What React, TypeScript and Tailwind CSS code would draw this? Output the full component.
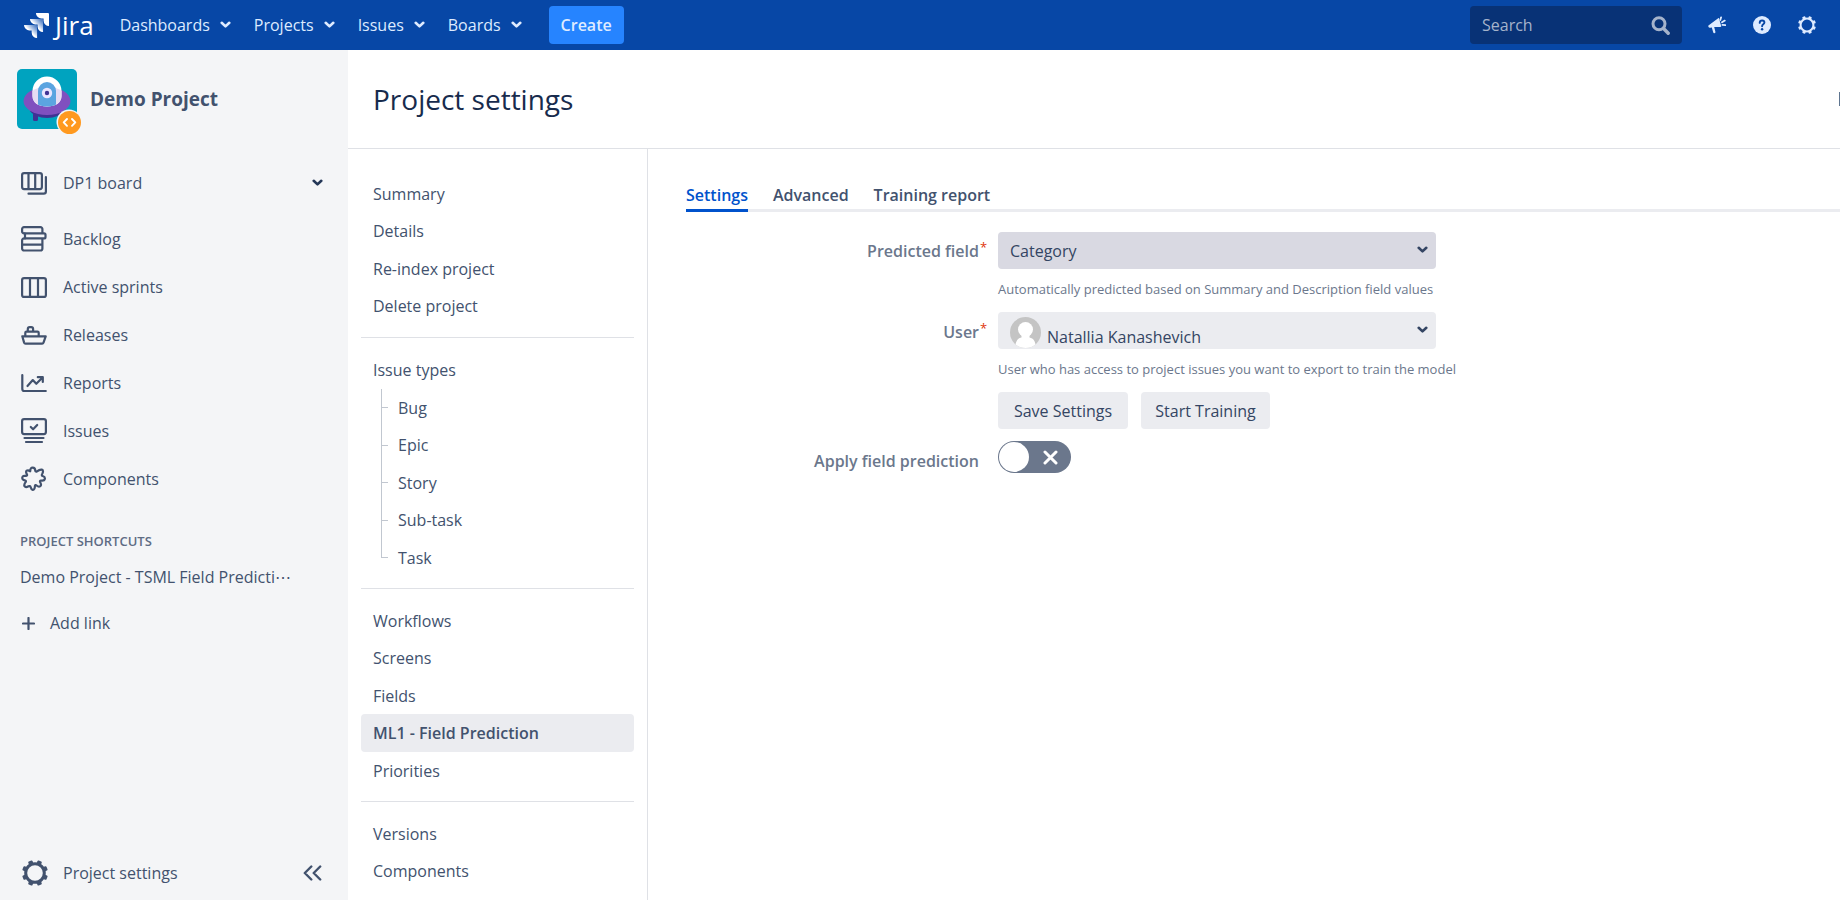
import React from 'react';

const primaryNav = ['Dashboards', 'Projects', 'Issues', 'Boards'];

const generalLinks = ['Summary', 'Details', 'Re-index project', 'Delete project'];
const issueTypes = ['Bug', 'Epic', 'Story', 'Sub-task', 'Task'];
const schemeLinks = ['Workflows', 'Screens', 'Fields', 'ML1 - Field Prediction', 'Priorities'];
const versionLinks = ['Versions', 'Components'];

const ACTIVE_LINK = 'ML1 - Field Prediction';

const ChevronDown = ({ className = '' }: { className?: string }) => (
  <svg className={className} width="11" height="8" viewBox="0 0 11 8" fill="none" stroke="currentColor" strokeWidth="2.6" strokeLinecap="round" strokeLinejoin="round">
    <path d="M1.7 1.8 5.5 5.4 9.3 1.8" />
  </svg>
);

const Gear = ({ size }: { size: number }) => (
  <svg width={size} height={size} viewBox="0 0 26 26" fill="none">
    <circle cx="13" cy="13" r="9.3" stroke="currentColor" strokeWidth="3" />
    {[22.5, 67.5, 112.5, 157.5, 202.5, 247.5, 292.5, 337.5].map((angle) => (
      <rect key={angle} x="10.7" y="0" width="4.6" height="4" rx="1" fill="currentColor" transform={`rotate(${angle} 13 13)`} />
    ))}
  </svg>
);

const JiraMark = () => (
  <svg width="25" height="25" viewBox="0 0 24 24">
    <defs>
      <linearGradient id="mark-mid" x1="18" y1="6" x2="11" y2="13" gradientUnits="userSpaceOnUse">
        <stop offset="0.15" stopColor="#deebff" stopOpacity="0.35" />
        <stop offset="0.9" stopColor="#fff" />
      </linearGradient>
      <linearGradient id="mark-low" x1="12.5" y1="11.5" x2="5.5" y2="18.5" gradientUnits="userSpaceOnUse">
        <stop offset="0.15" stopColor="#deebff" stopOpacity="0.35" />
        <stop offset="0.9" stopColor="#fff" />
      </linearGradient>
    </defs>
    <path fill="#fff" d="M23.013 0H11.455a5.215 5.215 0 0 0 5.215 5.215h2.129v2.057A5.215 5.215 0 0 0 24 12.483V1.005A1.001 1.001 0 0 0 23.013 0Z" />
    <path fill="url(#mark-mid)" d="M17.294 5.757H5.736a5.215 5.215 0 0 0 5.215 5.214h2.129v2.058a5.218 5.218 0 0 0 5.215 5.214V6.758a1.001 1.001 0 0 0-1.001-1.001z" />
    <path fill="url(#mark-low)" d="M11.571 11.513H0a5.218 5.218 0 0 0 5.232 5.215h2.13v2.057A5.215 5.215 0 0 0 12.575 24V12.518a1.005 1.005 0 0 0-1.005-1.005z" />
  </svg>
);

const SearchIcon = () => (
  <svg width="19" height="19" viewBox="0 0 19 19" fill="none" stroke="currentColor">
    <circle cx="8" cy="7.8" r="6" strokeWidth="3" />
    <path d="m12.8 12.8 4.4 4.4" strokeWidth="3.4" strokeLinecap="round" />
  </svg>
);

const Megaphone = () => (
  <svg width="18" height="18" viewBox="0 0 18 18" fill="currentColor">
    <path d="M10.2 2.2c.3-.2.7 0 .8.3l2.2 7.6c.1.5-.2.9-.7.9H6.200l1.200 4.800a1.100 1.100 0 0 1-1 1.400c-.7.1-1-.3-1.200-.9L3.800 11.500l-1.500.3C1.400 12 .7 11.600.4 10.800.1 10 .4 9.300 1.100 8.900Z" />
    <path d="m12.300 4 .8-2.700M14 6.300l2.800-1.700M14.400 8.900l3 .3" fill="none" stroke="currentColor" strokeWidth="1.800" strokeLinecap="round" />
  </svg>
);

const HelpIcon = () => (
  <svg width="18" height="18" viewBox="0 0 18 18" fill="none">
    <circle cx="9" cy="9" r="9" fill="currentColor" />
    <path d="M6.700 6.900c0-1.500 1-2.400 2.400-2.400 1.400 0 2.300.9 2.300 2 0 1.800-2.300 1.800-2.300 3.700" stroke="#0747a6" strokeWidth="1.900" strokeLinecap="round" />
    <circle cx="9.100" cy="13.300" r="1.200" fill="#0747a6" />
  </svg>
);

const ProjectAvatar = () => (
  <svg width="60" height="60" viewBox="0 0 60 60">
    <rect width="60" height="60" rx="5" fill="#00a3bf" />
    <path d="M16 44h5v6.500a1.500 1.500 0 0 1-1.500 1.500h-2a1.500 1.500 0 0 1-1.500-1.500Z" fill="#403294" />
    <path d="M13 42c3 4 9 7 17 7s14-3 17-7Z" fill="#403294" />
    <ellipse cx="30" cy="32" rx="23.500" ry="14" fill="#8050bf" />
    <path d="M15.500 22a14.500 14.500 0 0 1 29 0v5c0 7-6.500 10.500-14.500 10.500S15.500 34 15.500 27Z" fill="#fff" />
    <path d="M15.500 22c3-2.400 8-4 14.500-4s11.500 1.600 14.500 4v5c0 7-6.500 10.500-14.500 10.500S15.500 34 15.500 27Z" fill="#e6dcf3" />
    <path d="M21 22a9 9 0 0 1 18 0v13.500c-2.500 1.400-5.500 2-9 2s-6.500-.6-9-2Z" fill="#5ba4e0" />
    <circle cx="30" cy="24" r="5.200" fill="#eae6ff" />
    <circle cx="30" cy="24" r="2.200" fill="#403294" />
  </svg>
);

const SoftwareBadge = () => (
  <svg className="absolute left-[39px] top-[40px]" width="26" height="26" viewBox="0 0 26 26" fill="none">
    <circle cx="13" cy="13" r="12.500" fill="#f4f5f7" />
    <circle cx="13.500" cy="13.500" r="11.500" fill="#ff991f" />
    <path d="m11 10-3.300 3.400 3.300 3.400M16 10l3.300 3.400-3.300 3.400" stroke="#fff" strokeWidth="1.900" strokeLinecap="round" strokeLinejoin="round" />
  </svg>
);

const SideIcon = ({ height, children }: { height: number; children: React.ReactNode }) => (
  <svg width="26" height={height} viewBox={`0 0 26 ${height}`} fill="none" stroke="currentColor" strokeWidth="2.2" strokeLinecap="round" strokeLinejoin="round">
    {children}
  </svg>
);

const BoardIcon = () => (
  <SideIcon height={23}>
    <rect x="1.100" y="1.100" width="19.800" height="16" rx="2" />
    <path d="M7.500 1.500v15.500M14.200 1.500v15.500" />
    <path d="M24.900 5v14.500a2.200 2.200 0 0 1-2.200 2.200H7.500" />
  </SideIcon>
);

const BacklogIcon = () => (
  <SideIcon height={26}>
    <path d="M3.500 7.300H3a1.900 1.900 0 0 1-1.900-1.900V3A1.900 1.900 0 0 1 3 1.100h16.500A1.900 1.900 0 0 1 21.400 3v4" />
    <path d="M4 7.300h19a1.500 1.500 0 0 1 1.500 1.500v2.100a1.500 1.500 0 0 1-1.500 1.500H4Z" />
    <path d="M21.400 13v9.500a2 2 0 0 1-2 2H3.100a2 2 0 0 1-2-2v-8.100a2 2 0 0 1 2-2H4M1.500 18.600h19.500" />
  </SideIcon>
);

const SprintIcon = () => (
  <SideIcon height={21}>
    <rect x="1.100" y="1.100" width="23.800" height="18.800" rx="2" />
    <path d="M9 1.500v18M17 1.500v18" />
  </SideIcon>
);

const ReleaseIcon = () => (
  <SideIcon height={19}>
    <path d="M1.300 10.300h23.400l-2.200 6.300a1.500 1.500 0 0 1-1.400 1H4.500a1.500 1.500 0 0 1-1.400-1Z" />
    <path d="M4.300 10V6.800a1.200 1.200 0 0 1 1.200-1.200h11a1.200 1.200 0 0 1 1.200 1.200V10M6.800 5.300V3a1.900 1.900 0 0 1 1.900-1.900h1.500A1.900 1.900 0 0 1 12.100 3v2.300" />
  </SideIcon>
);

const ReportIcon = () => (
  <SideIcon height={20}>
    <path d="M1.300 2v14a2 2 0 0 0 2 2h21.500" />
    <path d="m6.500 13 5.300-5.900 3.500 3.700 6-6M16.800 4.200h5V9" />
  </SideIcon>
);

const IssueIcon = () => (
  <SideIcon height={26}>
    <rect x="1.100" y="1.100" width="23.800" height="15" rx="2" />
    <path d="m9.800 9 2.300 2.300 4.100-4.300M3.500 20h19M5 24h16" />
  </SideIcon>
);

const ComponentIcon = () => (
  <SideIcon height={26}>
    <path d="M9.300 4.500C9.300 2.700 10.200 1.500 11.700 1.600c1.700.1 2.500 1.400 2.600 3 .1 1 .9 1.300 1.700.7 1.300-1 3.200-2 4.800-1.700 1.500.4 1.400 2.400.6 3.900-.8 1.300-.9 2.100.3 2.500 1.700.5 2.400 1.600 2.100 2.900-.4 1.700-1.900 1.800-3.600 1.600-1.200-.1-1.500.7-1 1.700.9 1.600 1.200 3.100.1 4-1.200.9-2.700.2-3.700-.7-.9-.8-1.600-.5-1.700.7-.1 2-.7 3.900-2.200 3.700-1.300-.2-1.700-1.500-2-2.700-.3-1.200-1.200-1.400-2.200-.9-1.400.8-3.200 1.100-4-.1-.7-1.300.2-2.800 1.100-4 .6-.9.300-1.700-.8-1.900-1.500-.2-2.700-1.100-2.500-2.600.2-1.700 1.700-2.100 3.300-1.800 1.200.2 1.800-.5 1.300-1.500-.8-1.400-1.300-2.800-.2-3.700 1-.8 2.300-.3 3.300.6.2.2.3-.2.300-.800Z" />
  </SideIcon>
);

const sideNav = [
  { label: 'Backlog', icon: <BacklogIcon /> },
  { label: 'Active sprints', icon: <SprintIcon /> },
  { label: 'Releases', icon: <ReleaseIcon /> },
  { label: 'Reports', icon: <ReportIcon /> },
  { label: 'Issues', icon: <IssueIcon /> },
  { label: 'Components', icon: <ComponentIcon /> },
];

const TopBar = () => (
  <header className="flex h-[50px] items-center bg-[#0747a6] pl-6 pr-6 text-[#deebff]">
    <a href="#" className="flex items-center gap-1.5 text-white">
      <JiraMark />
      <span className="text-[26px] leading-8">Jira</span>
    </a>
    <nav className="ml-[26px] flex items-center gap-[23px]">
      {primaryNav.map((item) => (
        <button key={item} className="flex items-center gap-2.5 hover:text-white">
          {item}
          <ChevronDown />
        </button>
      ))}
    </nav>
    <button className="ml-[27px] h-[38px] rounded bg-[#2684ff] px-3 font-semibold hover:bg-[#4c9aff]">Create</button>
    <div className="ml-auto flex h-[38px] w-[212px] items-center rounded bg-[#083276] pl-3 pr-3 text-[#a5b3cb]">
      <input type="text" aria-label="Search" placeholder="Search" className="min-w-0 flex-1 bg-transparent outline-none placeholder:text-[#a5b3cb]" />
      <SearchIcon />
    </div>
    <div className="ml-[26px] flex items-center gap-[27px]">
      <button aria-label="Feedback"><Megaphone /></button>
      <button aria-label="Help"><HelpIcon /></button>
      <button aria-label="Administration"><Gear size={18} /></button>
    </div>
  </header>
);

const ProjectSidebar = () => (
  <aside className="flex w-[348px] shrink-0 flex-col bg-[#f4f5f7] text-[#42526e]">
    <div className="flex items-center gap-[13px] pl-[17px] pt-[19px]">
      <a href="#" aria-label="Demo Project" className="relative">
        <ProjectAvatar />
        <SoftwareBadge />
      </a>
      <h2 className="text-[19px] font-bold">Demo Project</h2>
    </div>

    <button className="mt-[30px] flex h-12 items-center gap-4 pl-[21px] pr-[25px] text-left">
      <BoardIcon />
      <span className="flex-1">DP1 board</span>
      <ChevronDown className="text-[#253858]" />
    </button>

    <ul className="mt-2">
      {sideNav.map((item) => (
        <li key={item.label}>
          <a href="#" className="flex h-12 items-center gap-4 pl-[21px] hover:bg-[#ebecf0]">
            {item.icon}
            {item.label}
          </a>
        </li>
      ))}
    </ul>

    <h3 className="mt-[26px] pl-5 text-[13px] font-semibold leading-6 text-[#5e6c84]">PROJECT SHORTCUTS</h3>
    <a href="#" className="mt-3 pl-5 leading-6">Demo Project - TSML Field Predicti⋯</a>
    <button className="mt-[22px] flex items-center gap-[15px] pl-[22px] leading-6">
      <svg width="13" height="13" viewBox="0 0 13 13" fill="none" stroke="currentColor" strokeWidth="2.200" strokeLinecap="round">
        <path d="M6.500 1v11M1 6.500h11" />
      </svg>
      Add link
    </button>

    <div className="mt-auto flex h-[54px] items-center justify-between pl-[22px] pr-[26px]">
      <a href="#" className="flex items-center gap-[15px]">
        <Gear size={26} />
        Project settings
      </a>
      <button aria-label="Collapse sidebar">
        <svg width="19" height="16" viewBox="0 0 19 16" fill="none" stroke="currentColor" strokeWidth="2.400" strokeLinecap="round" strokeLinejoin="round">
          <path d="M8.300 1.500 1.800 8l6.500 6.500M17.200 1.500 10.700 8l6.500 6.500" />
        </svg>
      </button>
    </div>
  </aside>
);

const LinkGroup = ({ links }: { links: string[] }) => (
  <ul>
    {links.map((link) => (
      <li key={link} className="h-[37px] even:h-[38px]">
        <a
          href="#"
          className={`flex h-full items-center rounded px-3 ${link === ACTIVE_LINK ? 'bg-[#ebecf0] font-semibold' : 'hover:bg-[#f4f5f7]'}`}
        >
          {link}
        </a>
      </li>
    ))}
  </ul>
);

const SettingsMenu = () => (
  <nav className="w-[300px] shrink-0 border-r border-[#dfe1e6] px-[13px] pt-[26px] text-[#42526e]">
    <LinkGroup links={generalLinks} />
    <hr className="mb-[13px] mt-3 border-[#dfe1e6]" />
    <a href="#" className="flex h-[38px] items-center px-3">Issue types</a>
    <ul className="ml-5">
      {issueTypes.map((type) => (
        <li key={type} className="group flex h-[37px] even:h-[38px]">
          {/* tree connector, the last one stops at its own row */}
          <span className="flex w-[7px] flex-col">
            <span className="flex-1 border-b border-l border-[#c1c7d0]" />
            <span className="flex-1 border-l border-[#c1c7d0] group-last:border-transparent" />
          </span>
          <a href="#" className="flex items-center pl-2.5">{type}</a>
        </li>
      ))}
    </ul>
    <hr className="mb-[13px] mt-3 border-[#dfe1e6]" />
    <LinkGroup links={schemeLinks} />
    <hr className="mb-[13px] mt-3 border-[#dfe1e6]" />
    <LinkGroup links={versionLinks} />
  </nav>
);

const Required = () => <span className="absolute left-full top-0 pl-px text-[13px] font-normal leading-4 text-[#de350b]">*</span>;

const FieldPredictionForm = () => {
  const [enabled, setEnabled] = React.useState(false);

  return (
    <form className="grid grid-cols-[293px_1fr] gap-x-[19px] pt-5" onSubmit={(e) => e.preventDefault()}>
      <label htmlFor="predicted-field" className="relative mt-[7px] justify-self-end font-semibold leading-6 text-[#6b778c]">
        Predicted field
        <Required />
      </label>
      <div className="h-20">
        <div className="relative w-[438px] text-[#344563]">
          <select id="predicted-field" className="h-[37px] w-full appearance-none rounded bg-[#d9d9e2] px-3 outline-none">
            <option>Category</option>
          </select>
          <ChevronDown className="pointer-events-none absolute right-2 top-3.5" />
        </div>
        <p className="mt-2 text-[13px] leading-6 text-[#6b778c]">Automatically predicted based on Summary and Description field values</p>
      </div>

      <label htmlFor="user" className="relative mt-2 justify-self-end font-semibold leading-6 text-[#6b778c]">
        User
        <Required />
      </label>
      <div className="h-20">
        <div className="relative w-[438px] text-[#344563]">
          <select id="user" className="h-[37px] w-full appearance-none rounded bg-[#ebecf0] pl-[49px] pr-3 pt-3 outline-none">
            <option>Natallia Kanashevich</option>
          </select>
          <svg className="pointer-events-none absolute left-3 top-[5px]" width="31" height="31" viewBox="0 0 31 31">
            <clipPath id="face"><circle cx="15.500" cy="15.500" r="15.500" /></clipPath>
            <g clipPath="url(#face)">
              <rect width="31" height="31" fill="#c4c4c4" />
              <circle cx="15.500" cy="12.500" r="7.500" fill="#fff" />
              <path d="M11.500 17h8v3.500c4 .8 6 3.500 6.500 10.500H5c.5-7 2.500-9.700 6.500-10.500Z" fill="#fff" />
            </g>
          </svg>
          <ChevronDown className="pointer-events-none absolute right-2 top-3.5" />
        </div>
        <p className="mt-2 text-[13px] leading-6 text-[#6b778c]">User who has access to project issues you want to export to train the model</p>
      </div>

      <div className="col-start-2 flex gap-[13px]">
        <button className="h-[37px] w-[130px] rounded bg-[#ebecf0] text-[#344563] hover:bg-[#dfe1e6]">Save Settings</button>
        <button className="h-[37px] w-[129px] rounded bg-[#ebecf0] text-[#344563] hover:bg-[#dfe1e6]">Start Training</button>
      </div>

      <label htmlFor="apply-prediction" className="mt-5 justify-self-end font-semibold leading-6 text-[#6b778c]">Apply field prediction</label>
      <div className="relative mt-3 h-8 w-[73px]">
        <input
          id="apply-prediction"
          type="checkbox"
          role="switch"
          checked={enabled}
          onChange={(e) => setEnabled(e.target.checked)}
          className="peer block h-8 w-[73px] cursor-pointer appearance-none rounded-full bg-[#6b778c] checked:bg-[#14892c]"
        />
        <span className="pointer-events-none absolute left-px top-px h-[30px] w-[30px] rounded-full bg-white peer-checked:left-[42px]" />
        <svg className="pointer-events-none absolute left-[45px] top-[9px] peer-checked:hidden" width="15" height="15" viewBox="0 0 15 15" fill="none" stroke="#fff" strokeWidth="3" strokeLinecap="round">
          <path d="m2 2 11 11M13 2 2 13" />
        </svg>
      </div>
    </form>
  );
};

const App = () => {
  return (
    <div className="flex h-screen flex-col overflow-hidden bg-white font-['Open_Sans','Noto_Sans',sans-serif] text-[16px]">
      <TopBar />
      <div className="flex min-h-0 flex-1">
        <ProjectSidebar />
        <div className="flex min-w-0 flex-1 flex-col">
          <div className="flex h-[99px] shrink-0 items-center justify-between border-b border-[#dfe1e6] pl-[25px]">
            <h1 className="text-[28px] font-medium text-[#172b4d]">Project settings</h1>
            <span className="h-3.5 w-px bg-[#5e7590]" />
          </div>
          <div className="flex min-h-0 flex-1">
            <SettingsMenu />
            <main className="min-w-0 flex-1 pl-[38px] pt-[31px]">
              <div role="tablist" className="flex h-8 gap-[25px] border-b-3 border-[#ebecf0] font-semibold text-[#42526e]">
                <button role="tab" aria-selected="true" className="-mb-[3px] border-b-3 border-[#0052cc] text-[#0052cc]">Settings</button>
                <button role="tab" aria-selected="false">Advanced</button>
                <button role="tab" aria-selected="false">Training report</button>
              </div>
              <FieldPredictionForm />
            </main>
          </div>
        </div>
      </div>
    </div>
  );
};

export default App;
